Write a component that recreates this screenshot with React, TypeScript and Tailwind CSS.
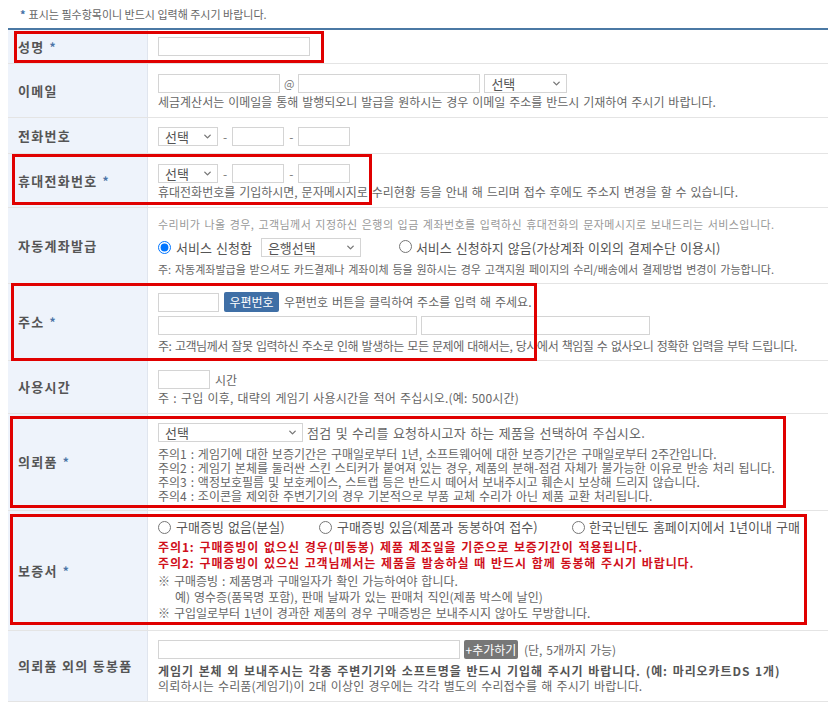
import { ChevronDown } from "lucide-react";

type RowProps = {
  label: string;
  required?: boolean;
  h: string;
  pad: string;
  children: React.ReactNode;
};

function Row({ label, required, h, pad, children }: RowProps) {
  return (
    <div className={`flex border-b border-[#e4e4e4] ${h}`}>
      <div className="flex w-[140px] shrink-0 items-center border-r border-[#e0e5ee] bg-[#eef3fb] pl-[10px] text-[13px] font-bold tracking-[1.3px] text-[#555]">
        {label}
        {required && <span className="ml-[5px] text-[12px] tracking-normal text-[#4a74a6]">*</span>}
      </div>
      <div
        className={`flex min-w-0 flex-1 flex-col pl-[10px] text-[12px] text-[#666] [word-spacing:1.2px] ${pad}`}
      >
        {children}
      </div>
    </div>
  );
}

function TextInput({ w }: { w: string }) {
  return <input type="text" className={`h-[19px] border border-[#d4d4d4] bg-white outline-none ${w}`} />;
}

function FakeSelect({ w, text = "선택" }: { w: string; text?: string }) {
  return (
    <div
      className={`relative flex h-[19px] shrink-0 items-center border border-[#d4d4d4] bg-white pl-[6px] text-[13px] text-[#555] ${w}`}
    >
      <span>{text}</span>
      <ChevronDown className="absolute right-[4px] h-[11px] w-[11px] text-[#777]" strokeWidth={3} aria-hidden="true" />
    </div>
  );
}

function Dash() {
  return <span className="mx-[5px] text-[#777]">-</span>;
}

function Radio({ checked, name }: { checked?: boolean; name: string }) {
  return <input type="radio" name={name} defaultChecked={checked} className="m-0 h-[13px] w-[13px] shrink-0" />;
}

export default function App() {
  return (
    <div className="relative h-[703px] w-[835px] overflow-hidden bg-white font-['Noto_Sans_CJK_KR',sans-serif]">
      {/* notice */}
      <div className="flex h-[28px] items-center pl-[20px] text-[11px] text-[#666]">
        <span className="mr-[3px] font-bold text-[#3f6fa5]">*</span>
        표시는 필수항목이니 반드시 입력해 주시기 바랍니다.
      </div>

      <div className="mx-[8px] w-[820px] border-t-2 border-[#4b79a4]">
        <Row label="성명" required h="h-[34px]" pad="justify-center">
          <TextInput w="w-[152px]" />
        </Row>

        <Row label="이메일" h="h-[54px]" pad="pt-[10px]">
          <div className="flex items-center">
            <TextInput w="w-[122px]" />
            <span className="mx-[4px] text-[11px] text-[#777]">@</span>
            <TextInput w="w-[182px]" />
            <div className="ml-[4px]">
              <FakeSelect w="w-[83px]" />
            </div>
          </div>
          <p className="mt-[1px] leading-[16px]">
            세금계산서는 이메일을 통해 발행되오니 발급을 원하시는 경우 이메일 주소를 반드시 기재하여 주시기 바랍니다.
          </p>
        </Row>

        <Row label="전화번호" h="h-[36px]" pad="pt-[9px]">
          <div className="flex items-center">
            <FakeSelect w="w-[60px]" />
            <Dash />
            <TextInput w="w-[52px]" />
            <Dash />
            <TextInput w="w-[52px]" />
          </div>
        </Row>

        <Row label="휴대전화번호" required h="h-[54px]" pad="pt-[10px]">
          <div className="flex items-center">
            <FakeSelect w="w-[60px]" />
            <Dash />
            <TextInput w="w-[52px]" />
            <Dash />
            <TextInput w="w-[52px]" />
          </div>
          <p className="mt-[1px] leading-[16px]">
            휴대전화번호를 기입하시면, 문자메시지로 수리현황 등을 안내 해 드리며 접수 후에도 주소지 변경을 할 수 있습니다.
          </p>
        </Row>

        <Row label="자동계좌발급" h="h-[76px]" pad="pt-[9px]">
          <p className="text-[11px] leading-[14px] tracking-[0.45px] text-[#999]">
            수리비가 나올 경우, 고객님께서 지정하신 은행의 입금 계좌번호를 입력하신 휴대전화의 문자메시지로 보내드리는 서비스입니다.
          </p>
          <div className="mt-[7px] flex h-[19px] items-center text-[13px] text-[#555]">
            <Radio name="acct" checked />
            <span className="ml-[5px]">서비스 신청함</span>
            <div className="ml-[9px]">
              <FakeSelect w="w-[100px]" text="은행선택" />
            </div>
            <div className="ml-[38px]">
              <Radio name="acct" />
            </div>
            <span className="ml-[4px]">서비스 신청하지 않음(가상계좌 이외의 결제수단 이용시)</span>
          </div>
          <p className="mt-[4px] text-[11px] leading-[16px] [word-spacing:1.3px]">
            주: 자동계좌발급을 받으셔도 카드결제나 계좌이체 등을 원하시는 경우 고객지원 페이지의 수리/배송에서 결제방법 변경이 가능합니다.
          </p>
        </Row>

        <Row label="주소" required h="h-[77px]" pad="pt-[8px]">
          <div className="flex h-[20px] items-center">
            <TextInput w="w-[61px]" />
            <button
              type="button"
              className="ml-[5px] h-[20px] w-[55px] rounded-[2px] bg-[#3f6fa6] text-[12px] text-white"
            >
              우편번호
            </button>
            <span className="ml-[5px]">우편번호 버튼을 클릭하여 주소를 입력 해 주세요.</span>
          </div>
          <div className="mt-[4px] flex items-center gap-[4px]">
            <TextInput w="w-[259px]" />
            <TextInput w="w-[229px]" />
          </div>
          <p className="mt-[3px] whitespace-nowrap leading-[16px] tracking-[-0.45px]">
            주: 고객님께서 잘못 입력하신 주소로 인해 발생하는 모든 문제에 대해서는, 당사에서 책임질 수 없사오니 정확한 입력을 부탁 드립니다.
          </p>
        </Row>

        <Row label="사용시간" h="h-[53px]" pad="pt-[9px]">
          <div className="flex items-center">
            <TextInput w="w-[52px]" />
            <span className="ml-[5px]">시간</span>
          </div>
          <p className="mt-[1px] leading-[16px] tracking-[0.2px]">
            주 : 구입 이후, 대략의 게임기 사용시간을 적어 주십시오.(예: 500시간)
          </p>
        </Row>

        <Row label="의뢰품" required h="h-[97px]" pad="pt-[9px]">
          <div className="flex items-center">
            <FakeSelect w="w-[145px]" />
            <span className="ml-[4px] text-[13px] tracking-[0.2px]">점검 및 수리를 요청하시고자 하는 제품을 선택하여 주십시오.</span>
          </div>
          <div className="mt-[4px] leading-[14px]">
            <p>주의1 : 게임기에 대한 보증기간은 구매일로부터 1년, 소프트웨어에 대한 보증기간은 구매일로부터 2주간입니다.</p>
            <p>주의2 : 게임기 본체를 둘러싼 스킨 스티커가 붙여져 있는 경우, 제품의 분해-점검 자체가 불가능한 이유로 반송 처리 됩니다.</p>
            <p>주의3 : 액정보호필름 및 보호케이스, 스트랩 등은 반드시 떼어서 보내주시고 훼손시 보상해 드리지 않습니다.</p>
            <p>주의4 : 조이콘을 제외한 주변기기의 경우 기본적으로 부품 교체 수리가 아닌 제품 교환 처리됩니다.</p>
          </div>
        </Row>

        <Row label="보증서" required h="h-[120px]" pad="pt-[8px]">
          <div className="flex h-[16px] items-center text-[13px] text-[#555]">
            <div className="flex w-[161px] items-center">
              <Radio name="warranty" />
              <span className="ml-[5px]">구매증빙 없음(분실)</span>
            </div>
            <div className="flex w-[253px] items-center">
              <Radio name="warranty" />
              <span className="ml-[5px]">구매증빙 있음(제품과 동봉하여 접수)</span>
            </div>
            <div className="flex items-center">
              <Radio name="warranty" />
              <span className="ml-[4px]">한국닌텐도 홈페이지에서 1년이내 구매</span>
            </div>
          </div>
          <div className="mt-[4px] text-[12px] font-bold leading-[16px] tracking-[0.9px] text-[#d0101b]">
            <p>주의1: 구매증빙이 없으신 경우(미동봉) 제품 제조일을 기준으로 보증기간이 적용됩니다.</p>
            <p>주의2: 구매증빙이 있으신 고객님께서는 제품을 발송하실 때 반드시 함께 동봉해 주시기 바랍니다.</p>
          </div>
          <div className="mt-[2px] leading-[16px]">
            <p>※ 구매증빙 : 제품명과 구매일자가 확인 가능하여야 합니다.</p>
            <p className="pl-[17px]">예) 영수증(품목명 포함), 판매 날짜가 있는 판매처 직인(제품 박스에 날인)</p>
            <p>※ 구입일로부터 1년이 경과한 제품의 경우 구매증빙은 보내주시지 않아도 무방합니다.</p>
          </div>
        </Row>

        <Row label="의뢰품 외의 동봉품" h="h-[71px]" pad="pt-[9px]">
          <div className="flex items-center">
            <TextInput w="w-[302px]" />
            <button
              type="button"
              className="ml-[4px] h-[19px] w-[54px] rounded-[2px] bg-[#777] text-[12px] text-white"
            >
              +추가하기
            </button>
            <span className="ml-[6px]">(단, 5개까지 가능)</span>
          </div>
          <p className="mt-[4px] text-[12px] font-bold leading-[15px] tracking-[0.9px] text-[#555]">
            게임기 본체 외 보내주시는 각종 주변기기와 소프트명을 반드시 기입해 주시기 바랍니다. (예: 마리오카트DS 1개)
          </p>
          <p className="leading-[15px] tracking-[0.15px]">
            의뢰하시는 수리품(게임기)이 2대 이상인 경우에는 각각 별도의 수리접수를 해 주시기 바랍니다.
          </p>
        </Row>
      </div>

      {/* red highlight boxes */}
      <div className="pointer-events-none absolute left-[14px] top-[31px] h-[32px] w-[310px] border-[3px] border-[#e00000]" />
      <div className="pointer-events-none absolute left-[12px] top-[154px] h-[51px] w-[360px] border-[3px] border-[#e00000]" />
      <div className="pointer-events-none absolute left-[11px] top-[283px] h-[78px] w-[526px] border-[3px] border-[#e00000]" />
      <div className="pointer-events-none absolute left-[10px] top-[416px] h-[92px] w-[776px] border-[3px] border-[#e00000]" />
      <div className="pointer-events-none absolute left-[10px] top-[514px] h-[111px] w-[797px] border-[3px] border-[#e00000]" />
    </div>
  );
}
